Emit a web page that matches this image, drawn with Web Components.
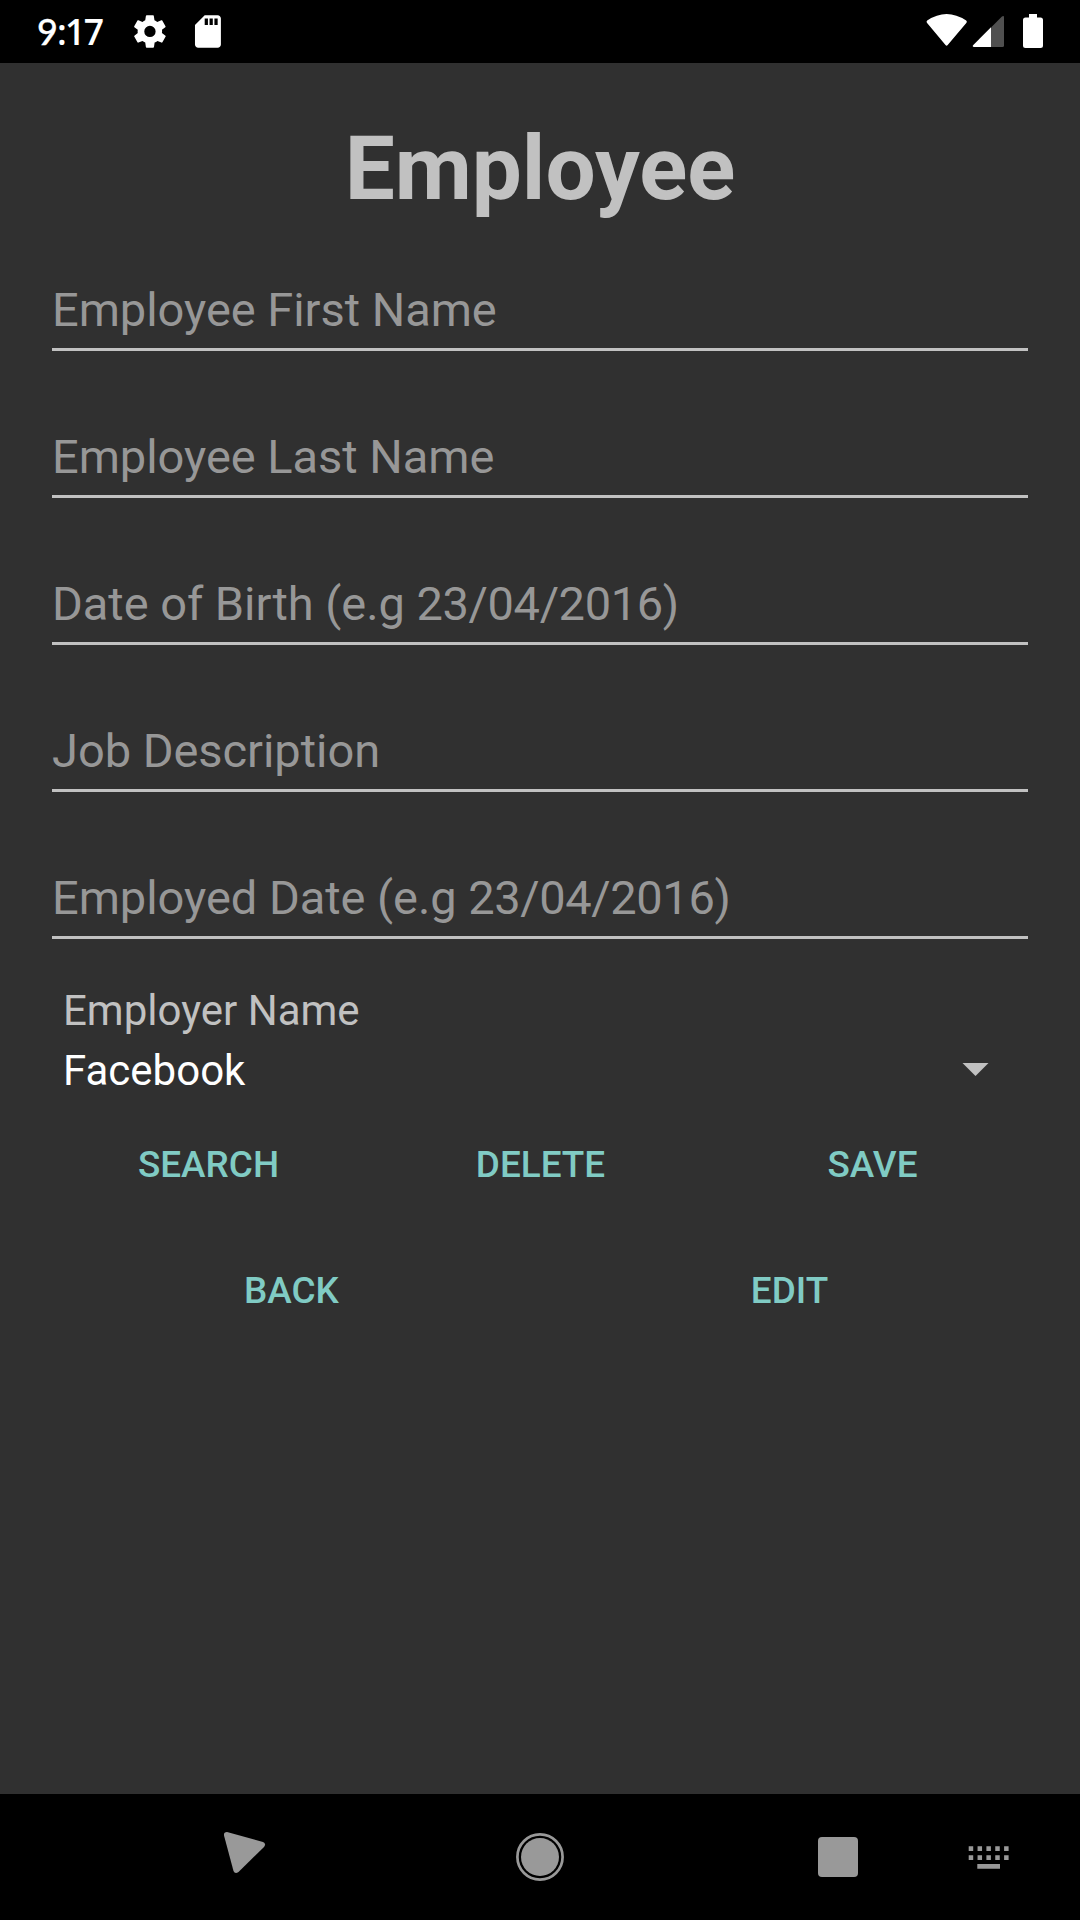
<!DOCTYPE html>
<html lang="en"><head><meta charset="utf-8"><title>Employee</title>
<style>html,body{margin:0;background:#303030}body{font-family:Roboto,sans-serif}</style></head>
<body><employee-app></employee-app>
<script>
const define=(name,html)=>customElements.define(name,class extends HTMLElement{constructor(){super();this.attachShadow({mode:'open'}).innerHTML=html}});
define('status-bar',`<style>
:host{display:flex;height:63px;box-sizing:border-box;background:#000;color:#fff;align-items:center;padding:0 37px}
time{font:600 35.5px/63px "Open Sans",Roboto,sans-serif;letter-spacing:-1.6px;width:96px;white-space:nowrap}
.nine{font-family:Lato,sans-serif;font-weight:500;font-size:36px;letter-spacing:-1px;-webkit-text-stroke:.3px #fff}
svg{display:block}.gap{flex:1}</style>
<time><span class="nine">9</span>:17</time>
<svg width="92" height="36" viewBox="133 14 92 36" fill="#fff"><path transform="translate(130.5 12) scale(1.62)" d="M19.4 13c0-.3.1-.6.1-1s0-.7-.1-1l2.1-1.6c.2-.2.2-.4.1-.6l-2-3.5c-.1-.2-.3-.3-.6-.2l-2.5 1c-.5-.4-1.1-.7-1.7-1l-.4-2.6C14.4 2.200 14.2 2 14 2h-4c-.2 0-.5.2-.5.4l-.4 2.7c-.6.2-1.1.6-1.7 1l-2.5-1c-.2-.1-.5 0-.6.2l-2 3.5c-.1.2-.1.5.1.6L4.500 11c0 .3-.1.600-.1 1s0 .7.1 1l-2.100 1.6c-.2.2-.2.4-.1.6l2 3.5c.1.2.3.3.6.2l2.5-1c.5.4 1.1.7 1.7 1l.4 2.7c0 .2.2.4.5.4h4c.2 0 .5-.2.5-.4l.4-2.7c.6-.2 1.2-.6 1.7-1l2.5 1c.2.1.5 0 .6-.2l2-3.5c.1-.2.1-.5-.1-.6zM12 15.500a3.500 3.500 0 1 1 0-7 3.500 3.500 0 0 1 0 7z"/><path transform="translate(188.5 12) scale(1.62)" d="M18 2h-8L4 8v12c0 1.100.9 2 2 2h12c1.100 0 2-.9 2-2V4c0-1.100-.9-2-2-2zm-6 6h-2V4h2v4zm3 0h-2V4h2v4zm3 0h-2V4h2v4z"/></svg>
<span class="gap"></span>
<svg width="117" height="36" viewBox="926 14 117 36" fill="#fff"><path d="M927.200 20.500Q946.500 7.500 966.200 20.500Q967.400 21.700 966.300 23L947.700 45Q946.600 46.500 945.500 45L927.100 23Q926 21.700 927.200 20.500Z"/><path d="M991 27.500L1001.700 16.700Q1004 15 1004 17.500V45.500Q1004 47 1002.500 47H991Z" fill="#505050"/><path d="M991 27.300V47H974Q971.800 46.500 973.300 45Z"/><path d="M1029 14h8v3.500h3.500q2.500 0 2.500 2.500v25.500q0 2.500-2.500 2.500h-15q-2.500 0-2.500-2.500V20q0-2.500 2.500-2.500h3.500z"/></svg>`);
define('text-entry',`<style>:host{display:block;height:78px;margin:0 52px 69px;border-bottom:3px solid #c1c1c1;box-sizing:border-box;color:#979797;font-size:47px;line-height:74px;letter-spacing:-.04px;white-space:nowrap}::slotted(span){letter-spacing:-.4px}</style><slot></slot>`);
define('flat-button',`<style>:host{display:block;flex:1}button{display:block;width:100%;height:126px;border:0;padding:0 0 0 1px;background:none;color:#80cbc4;font:500 36.900px/126px Roboto,sans-serif;text-align:center}</style><button><slot></slot></button>`);
define('employer-select',`<style>:host{display:block;padding:0 63px;font-size:42px;line-height:60px;color:#c1c1c1}
div{display:flex;justify-content:space-between;align-items:center;color:#fff;padding-right:28px}svg{display:block;margin-bottom:3px}</style><slot name="label"></slot><div><slot></slot><svg width="27" height="13"><path d="M.5 0H26.500L13.500 13Z" fill="#c1c1c1"/></svg></div>`);
define('navigation-bar',`<style>:host{display:block;height:126px;background:#000}svg{display:block}</style>
<svg width="1080" height="126" viewBox="0 1794 1080 126" fill="#999"><path d="M227 1832L263 1842Q266.500 1843.500 264 1847L238.500 1872Q235 1874.500 233.500 1871L224 1835.500Q223.500 1832 227 1832Z"/><circle cx="540" cy="1857" r="19"/><circle cx="540" cy="1857" r="22.600" fill="none" stroke="#999" stroke-width="2.700"/><rect x="818" y="1837" width="40" height="40" rx="4"/><path d="M968.700 1846.300h4.500v4.700h-4.500zm8.850 0h4.500v4.700h-4.500zm8.850 0h4.500v4.700h-4.500zm8.850 0h4.500v4.700h-4.500zm8.850 0h4.500v4.700h-4.500zM968.700 1855.200h4.500v4.700h-4.500zm8.850 0h4.500v4.700h-4.500zm8.850 0h4.500v4.700h-4.500zm8.850 0h4.500v4.700h-4.500zm8.850 0h4.500v4.700h-4.500zM977.300 1864h22.700v4.700h-22.700z"/></svg>`);
define('employee-app',`<style>:host{display:flex;flex-direction:column;width:1080px;height:1920px;background:#303030;overflow:hidden}
h1{margin:43px 0 42px;color:#c1c1c1;font-size:89px;line-height:125px;text-align:center}
main{flex:1}.row{display:flex;padding:0 42px}.three{margin-top:1px}.last{margin-bottom:42px}</style>
<status-bar></status-bar><main><h1>Employee</h1>
<text-entry>Employee First Name</text-entry><text-entry>Employee Last Name</text-entry><text-entry>Date of Birth (e.g <span>23/04/2016)</span></text-entry><text-entry>Job Description</text-entry><text-entry class="last">Employed Date (e.g <span>23/04/2016)</span></text-entry>
<employer-select><span slot="label">Employer Name</span>Facebook</employer-select>
<div class="row three"><flat-button>SEARCH</flat-button><flat-button>DELETE</flat-button><flat-button>SAVE</flat-button></div><div class="row"><flat-button>BACK</flat-button><flat-button>EDIT</flat-button></div></main><navigation-bar></navigation-bar>`);
</script></body></html>
